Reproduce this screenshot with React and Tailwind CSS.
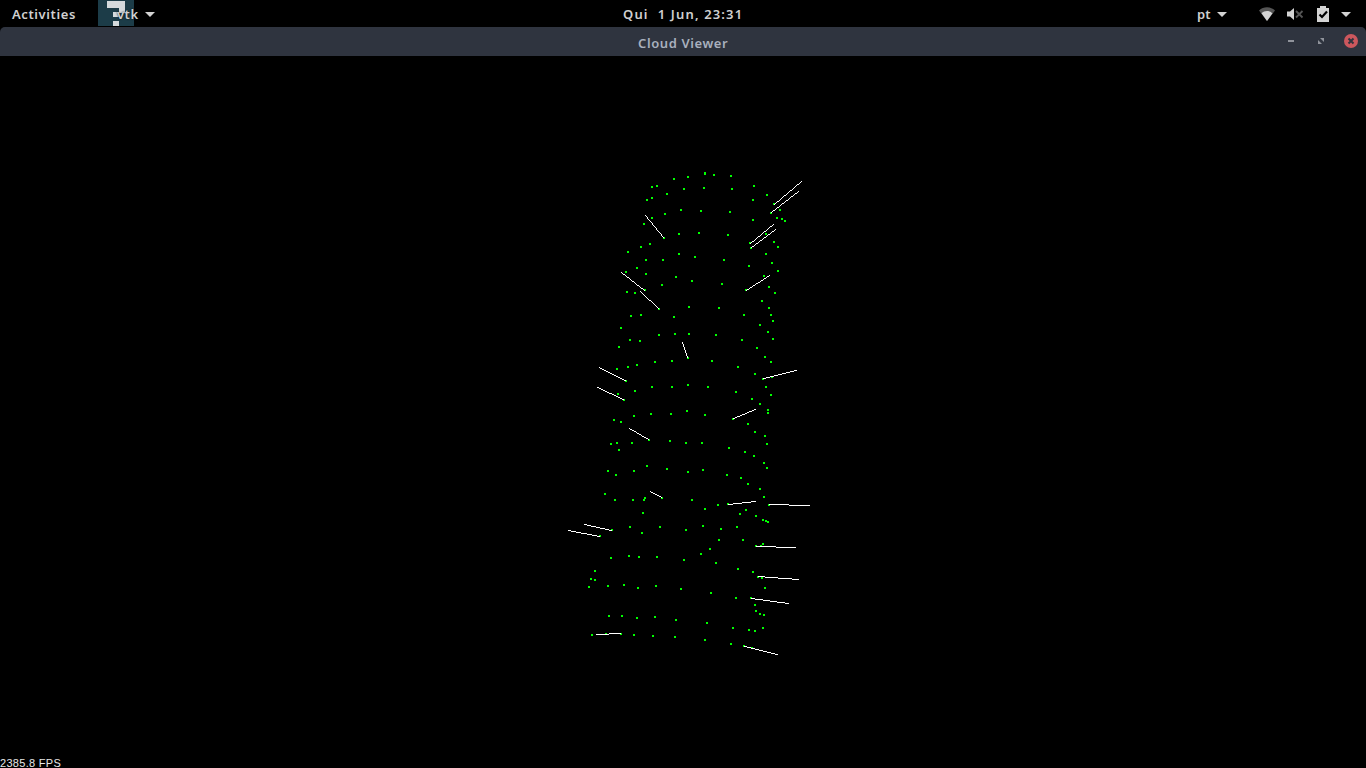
import React from "react";

const POINTS = [
  [687,176],[673,178],[656,185],[651,186],[683,188],[666,193],[651,197],[646,199],[680,209],[664,213],
  [651,217],[643,223],[678,233],[698,232],[663,237],[649,243],[640,246],[627,251],[678,253],[694,256],
  [645,259],[662,259],[636,267],[625,271],[645,273],[675,276],[691,280],[661,284],[644,289],
  [704,172],[704,173],[713,174],[730,175],[703,187],[731,188],[753,185],[766,194],[752,199],[773,203],
  [700,210],[729,211],[770,212],[779,209],[776,217],[781,218],[784,220],[752,219],[727,234],[765,233],
  [749,242],[750,247],[773,241],[777,246],[765,253],[748,265],[723,259],[771,262],[777,270],[763,275],
  [721,283],[768,286],[745,289],[626,291],[634,292],[658,308],[688,306],[630,315],[640,314],[673,316],
  [620,327],[658,334],[674,333],[688,333],[629,339],[639,340],[618,346],[687,357],[671,360],[654,361],
  [636,364],[627,366],[616,368],[625,380],[687,384],[651,386],[671,386],[634,390],[617,393],[623,399],
  [774,292],[761,300],[768,307],[718,307],[743,314],[770,314],[772,320],[759,324],[767,331],[715,334],
  [741,339],[772,338],[756,347],[764,356],[770,361],[711,360],[737,366],[754,373],[762,378],[771,376],
  [765,386],[707,386],[735,391],[770,394],[751,398],[759,403],[767,409],[767,412],[686,410],[670,413],
  [650,413],[633,415],[613,419],[620,421],[648,439],[669,440],[685,442],[631,442],[616,442],[610,443],
  [618,449],[646,465],[666,468],[633,470],[607,470],[687,471],[615,474],[604,493],[661,497],[644,497],
  [643,499],[632,499],[614,499],[691,499],[642,512],[629,526],[659,526],[685,529],[611,529],[704,414],
  [732,418],[747,423],[754,431],[764,435],[766,443],[701,442],[728,447],[744,451],[753,455],[763,462],
  [766,467],[702,469],[726,474],[740,477],[747,483],[759,488],[763,496],[727,503],[717,504],[768,504],
  [704,508],[745,509],[739,513],[755,515],[762,519],[765,520],[767,521],[702,525],[736,526],[720,528],
  [599,535],[641,532],[610,557],[628,555],[638,556],[656,556],[683,559],[594,570],[590,578],[594,579],
  [588,586],[607,585],[623,584],[637,587],[655,585],[680,588],[608,615],[621,615],[636,617],[654,616],
  [675,619],[591,634],[605,633],[620,633],[633,634],[652,635],[674,636],[718,539],[742,539],[709,548],
  [700,553],[715,562],[737,568],[752,571],[755,545],[760,545],[762,543],[757,576],[761,577],[764,587],
  [710,592],[735,597],[750,597],[754,604],[755,610],[759,613],[763,614],[706,622],[732,627],[748,629],
  [754,630],[762,627],[704,639],[730,643],[743,645],[751,647],
];

const NORMALS = [
  [663,237,645,215],[644,290,621,272],[658,308,640,291],[687,357,682,342],[625,380,599,367],
  [623,399,597,387],[648,439,629,428],[661,497,650,491],[611,530,584,524],[599,536,568,530],
  [596,634,620,633],[774,204,801,181],[771,212,798,191],[750,243,773,224],[751,247,775,229],
  [746,290,769,275],[763,378,796,370],[733,418,755,409],[728,504,755,501],[769,504,809,505],
  [756,546,795,547],[758,576,798,579],[751,598,788,603],[744,646,777,654],
];

// One unit square per step, so normals stay unsmoothed like the GL renderer's.
function rasterLine([x0, y0, x1, y1]) {
  const n = Math.max(Math.abs(x1 - x0), Math.abs(y1 - y0));
  let d = "";
  for (let i = 0; i <= n; i++) {
    const x = Math.round(x0 + ((x1 - x0) * i) / n);
    const y = Math.round(y0 + ((y1 - y0) * i) / n);
    d += `M${x} ${y}h1v1h-1z`;
  }
  return d;
}

const POINT_PATH = POINTS.map(([x, y]) => `M${x} ${y}h2v2h-2z`).join("");
const NORMAL_PATH = NORMALS.map(rasterLine).join("");

function Caret({ className }) {
  return (
    <svg className={className} width="10" height="5" viewBox="0 0 10 5">
      <path d="M0 0h10L5 5z" fill="#d3d3d3" />
    </svg>
  );
}

function ShellBar() {
  return (
    <header className="grid h-[27px] grid-cols-[1fr_auto_1fr] bg-black text-[13px] font-semibold leading-[27px] text-[#d0d0d0]">
      <div className="flex pl-3">
        <span className="w-[86px] pt-px tracking-[0.6px]">Activities</span>
        <div className="grid w-[60px] grid-cols-1 grid-rows-1">
          <svg className="col-start-1 row-start-1" width="36" height="26" viewBox="0 0 36 26" shapeRendering="crispEdges">
            <path d="M0 0h36v26H0z" fill="#1c3c48" />
            <path d="M9 1h18v12h-6v4h-6v-5h6V8H9zM15 21h6v5h-6z" fill="#d5dadd" />
          </svg>
          <div className="col-start-1 row-start-1 flex items-center pl-[19px]">
            <span className="w-7 pt-px tracking-[0.5px] [text-shadow:0_0_2px_#000]">vtk</span>
            <Caret className="shrink-0" />
          </div>
        </div>
      </div>
      <span className="w-[120px] whitespace-pre pt-px tracking-[1.15px]">Qui  1 Jun, 23:31</span>
      <div className="flex items-center justify-end pr-[15px]">
        <span className="w-5 pt-px">pt</span>
        <Caret />
        <svg className="ml-8" width="16" height="14" viewBox="0 0 16 14">
          <path d="M0 3.5C4.5-.7 11.500-.7 16 3.500L8 14z" fill="#555" />
          <path d="M2.500 6.300C5.500 3.300 10.500 3.300 13.500 6.300L8 14z" fill="#d3d3d3" />
        </svg>
        <svg className="ml-3" width="17" height="14" viewBox="0 0 17 14">
          <path d="M0 4.500h3L7 1v12L3 9.500H0z" fill="#d3d3d3" />
          <path d="M9 4l6.500 6.500M15.500 4L9 10.500" stroke="#555" strokeWidth="1.800" />
        </svg>
        <svg className="ml-[13px]" width="12" height="16" viewBox="0 0 12 16">
          <path d="M3 0h6v2h3v14H0V2h3z" fill="#d3d3d3" />
          <path d="M2.500 8.500l2.500 2.500 5-5.500" fill="none" stroke="#000" strokeWidth="2.200" />
        </svg>
        <Caret className="ml-3" />
      </div>
    </header>
  );
}

function TitleBar() {
  return (
    <div className="grid h-[29px] grid-cols-[1fr_auto_1fr] items-center rounded-t-[5px] bg-[#2f343f]">
      <span />
      <h1 className="w-[90px] whitespace-nowrap pt-[3px] text-[13px] font-semibold leading-[26px] tracking-[0.6px] text-[#a9b0be]">
        Cloud Viewer
      </h1>
      <div className="flex items-center justify-end pb-[2px] pr-2">
        <svg width="6" height="2" viewBox="0 0 6 2">
          <path d="M0 0h6v2H0z" fill="#90939b" />
        </svg>
        <svg className="ml-6" width="6" height="6" viewBox="0 0 6 6">
          <path d="M2 0h4v4zM0 2v4h4z" fill="#90939b" />
        </svg>
        <svg className="ml-5" width="14" height="14" viewBox="0 0 14 14">
          <circle cx="7" cy="7" r="7" fill="#cc575d" />
          <path d="M4.500 4.500l5 5M9.500 4.500l-5 5" stroke="#2f343f" strokeWidth="2" />
        </svg>
      </div>
    </div>
  );
}

export default function App() {
  return (
    <div className="flex h-[768px] w-[1366px] flex-col overflow-hidden bg-black font-['Noto_Sans','Open_Sans',sans-serif]">
      <ShellBar />
      <TitleBar />
      <main className="flex h-[712px] flex-col bg-black">
        <svg className="h-[700px] w-[1366px] shrink-0" viewBox="0 56 1366 700" shapeRendering="crispEdges">
          <path d={POINT_PATH} fill="#00ff00" />
          <path d={NORMAL_PATH} fill="#ffffff" />
        </svg>
        <p className="h-3 font-['Liberation_Sans',sans-serif] text-[11px] leading-[14px] tracking-[0.3px] text-[#e8e8e8]">2385.8 FPS</p>
      </main>
    </div>
  );
}
